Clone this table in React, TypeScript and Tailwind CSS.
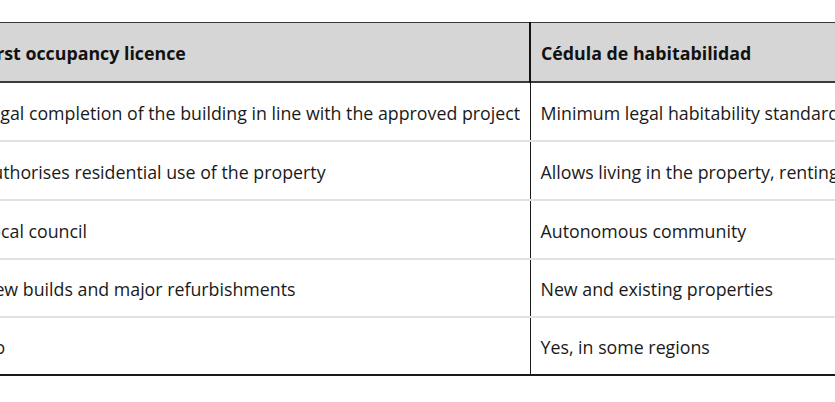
const rows: [string, string][] = [
  [
    "Legal completion of the building in line with the approved project",
    "Minimum legal habitability standards",
  ],
  [
    "Authorises residential use of the property",
    "Allows living in the property, renting it and connecting utilities",
  ],
  ["Local council", "Autonomous community"],
  ["New builds and major refurbishments", "New and existing properties"],
  ["No", "Yes, in some regions"],
];

const App = () => {
  return (
    <div
      className="h-[402px] w-[835px] overflow-hidden bg-white pt-[22px] text-[17.8px] text-[#1a1a1a]"
      style={{ fontFamily: '"Open Sans", sans-serif' }}
    >
      <table className="ml-[-29px] w-[1000px] table-fixed border-collapse">
        <colgroup>
          <col className="w-[559px]" />
          <col />
        </colgroup>
        <thead>
          <tr className="h-[59px] border-t border-b-2 border-t-[#3a3a3a] border-b-[#3a3a3a] bg-[#d6d6d6]">
            <th className="px-[10px] pt-[4px] text-left font-bold text-[#111]">First occupancy licence</th>
            <th className="border-l-2 border-l-[#111] px-[10px] pt-[4px] text-left font-bold text-[#111]">
              Cédula de habitabilidad
            </th>
          </tr>
        </thead>
        <tbody>
          {rows.map(([a, b], i) => (
            <tr
              key={i}
              className={
                i === rows.length - 1
                  ? "h-[58px] border-b-2 border-b-[#1a1a1a]"
                  : i === rows.length - 2
                    ? "h-[58px] border-b-2 border-b-[#e2e2e2]"
                    : "h-[59px] border-b-2 border-b-[#e2e2e2]"
              }
            >
              <td className="whitespace-nowrap px-[10px] pt-[4px]">{a}</td>
              <td className="whitespace-nowrap border-l border-l-[#1a1a1a] px-[10px] pt-[4px]">{b}</td>
            </tr>
          ))}
        </tbody>
      </table>
    </div>
  );
};

export default App;
